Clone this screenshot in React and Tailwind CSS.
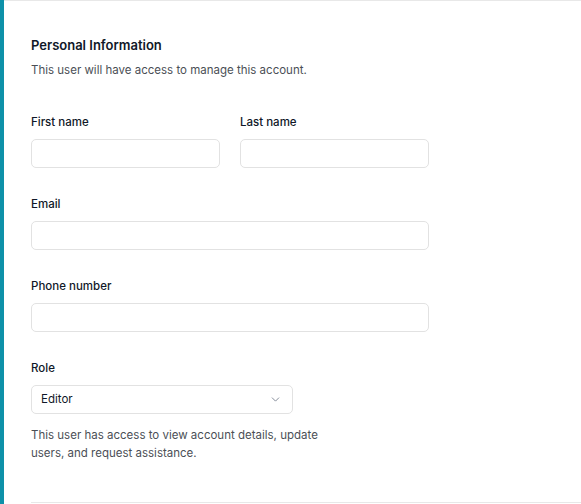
import React from 'react';
import { ChevronDown } from 'lucide-react';

const Field = ({ label, className = '' }) => (
    <div className={`flex flex-col ${className}`}>
        <label className="text-[11.5px] font-medium text-gray-900 leading-[16px]">{label}</label>
        <input className="mt-[9px] h-[29px] w-full rounded-[5px] border border-[#e2e2e2] bg-white outline-none" />
    </div>
);

export default function App() {
    return (
        <div className="min-h-[504px] w-full bg-white flex font-['Inter',sans-serif]">
            {/* accent bar */}
            <div className="w-[4px] shrink-0 bg-[#0e91a9]" />
            <div className="flex-1 border-t border-[#e8e8e8] pl-[27px] pt-[35px] h-[504px] overflow-hidden">
                <h2 className="text-[13px] font-semibold text-gray-900 leading-[18px]">Personal Information</h2>
                <p className="mt-[8px] text-[11.5px] text-[#4b4f56] leading-[16px]">
                    This user will have access to manage this account.
                </p>

                <div className="w-[398px] mt-[36px]">
                    <div className="grid grid-cols-2 gap-x-[20px]">
                        <Field label="First name" />
                        <Field label="Last name" />
                    </div>
                    <Field label="Email" className="mt-[28px]" />
                    <Field label="Phone number" className="mt-[28px]" />

                    <div className="mt-[28px] flex flex-col">
                        <label className="text-[11.5px] font-medium text-gray-900 leading-[16px]">Role</label>
                        <div className="mt-[9px] h-[29px] w-[262px] rounded-[5px] border border-[#e2e2e2] flex items-center justify-between pl-[9px] pr-[10px]">
                            <span className="text-[11.5px] text-gray-900">Editor</span>
                            <ChevronDown size={13} strokeWidth={1.5} className="text-gray-500" />
                        </div>
                        <p className="mt-[12px] w-[300px] text-[11.5px] text-[#4b4f56] leading-[18px]">
                            This user has access to view account details, update users, and request assistance.
                        </p>
                    </div>
                </div>

                <div className="mt-[40px] border-t border-[#e8e8e8]" />
            </div>
        </div>
    );
}
